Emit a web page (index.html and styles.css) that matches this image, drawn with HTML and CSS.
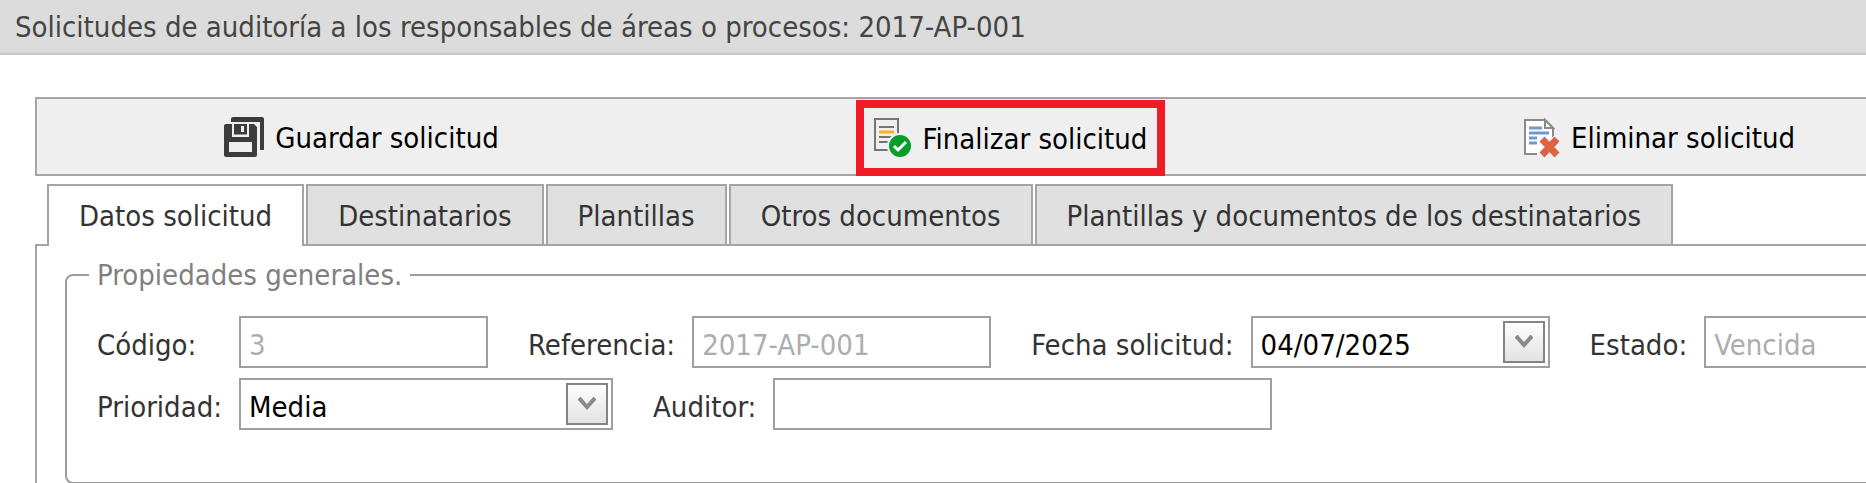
FILE: index.html
```
<!DOCTYPE html>
<html lang="es">
<head>
  <meta charset="UTF-8" />
  <meta name="viewport" content="width=device-width, initial-scale=1.0" />
  <title>Solicitudes de auditoría</title>
  <link rel="stylesheet" href="styles.css">
</head>
<body>
  <header class="page-header">
    <h1>Solicitudes de auditoría a los responsables de áreas o procesos: 2017-AP-001</h1>
  </header>

  <main class="content">
    <div class="toolbar">
      <div class="toolbar-cell">
        <button type="button" class="tool">
          <svg class="tool-icon" width="40" height="40" viewBox="0 0 40 40" aria-hidden="true">
            <path d="M9 0h29a2 2 0 0 1 2 2v31h-4V5H7V2a2 2 0 0 1 2-2z" fill="#3c3c3c"/>
            <path d="M2 7h6v13h17V7h5l3 3v28a2 2 0 0 1-2 2H2a2 2 0 0 1-2-2V9a2 2 0 0 1 2-2z" fill="#3c3c3c"/>
            <path d="M10 7h13v10.500H10z" fill="#3c3c3c"/>
            <path d="M17 9h3v6h-3z" fill="#efefef"/>
            <path d="M5 25h23v10H5z" fill="#efefef"/>
          </svg>
          <span>Guardar solicitud</span>
        </button>
      </div>
      <div class="toolbar-cell">
        <button type="button" class="tool tool-marked">
          <svg class="tool-icon" width="38" height="40" viewBox="0 0 38 40" aria-hidden="true">
            <rect x="1" y="1" width="23" height="31" fill="#efefef" stroke="#757575" stroke-width="2"/>
            <path d="M5 9h15M5 19h15M5 24h11" stroke="#757575" stroke-width="2"/>
            <path d="M5 14h15" stroke="#fcb026" stroke-width="3"/>
            <circle cx="26" cy="28" r="13" fill="#efefef"/>
            <circle cx="26" cy="28" r="11" fill="#069e2a"/>
            <path d="M20 28l4 4 8-8" fill="none" stroke="#fff" stroke-width="3"/>
          </svg>
          <span>Finalizar solicitud</span>
        </button>
      </div>
      <div class="toolbar-cell">
        <button type="button" class="tool">
          <svg class="tool-icon" width="36" height="40" viewBox="0 0 36 40" aria-hidden="true">
            <path d="M13 37H1V3h20l8 8v9" fill="#fff" stroke="#8a8a8a" stroke-width="2"/>
            <path d="M21 3v8h8z" fill="#fff" stroke="#8a8a8a" stroke-width="2"/>
            <path d="M5 11h13M5 16h20M5 21h8M5 26h8" stroke="#6c9bd0" stroke-width="3"/>
            <path d="M18 22l15 16M33 22l-15 16" stroke="#fff" stroke-width="9"/>
            <path d="M18 22l15 16M33 22l-15 16" stroke="#dc6344" stroke-width="7"/>
          </svg>
          <span>Eliminar solicitud</span>
        </button>
      </div>
    </div>

    <div class="tabs" role="tablist">
      <button type="button" class="tab active" role="tab" aria-selected="true">Datos solicitud</button>
      <button type="button" class="tab" role="tab">Destinatarios</button>
      <button type="button" class="tab" role="tab">Plantillas</button>
      <button type="button" class="tab" role="tab">Otros documentos</button>
      <button type="button" class="tab" role="tab">Plantillas y documentos de los destinatarios</button>
    </div>

    <form class="panel">
      <fieldset>
        <legend>Propiedades generales.</legend>
        <div class="form-row">
          <div class="field">
            <label class="first-label" for="codigo">Código:</label>
            <input type="text" id="codigo" class="w-small" value="3" disabled />
          </div>
          <div class="field">
            <label for="referencia">Referencia:</label>
            <input type="text" id="referencia" class="w-medium" value="2017-AP-001" disabled />
          </div>
          <div class="field">
            <label for="fecha">Fecha solicitud:</label>
            <div class="combo w-medium">
              <input type="text" id="fecha" value="04/07/2025" />
              <button type="button" class="combo-btn" aria-label="Abrir calendario">
                <svg width="18" height="14" viewBox="0 0 18 14"><path d="M1 1l8 9 8-9" fill="none" stroke="#8a8a8a" stroke-width="4"/></svg>
              </button>
            </div>
          </div>
          <div class="field">
            <label for="estado">Estado:</label>
            <input type="text" id="estado" class="w-medium" value="Vencida" disabled />
          </div>
        </div>
        <div class="form-row">
          <div class="field">
            <label class="first-label" for="prioridad">Prioridad:</label>
            <div class="combo w-large">
              <select id="prioridad">
                <option>Alta</option>
                <option selected>Media</option>
                <option>Baja</option>
              </select>
              <span class="combo-btn">
                <svg width="18" height="14" viewBox="0 0 18 14"><path d="M1 1l8 9 8-9" fill="none" stroke="#8a8a8a" stroke-width="4"/></svg>
              </span>
            </div>
          </div>
          <div class="field">
            <label for="auditor">Auditor:</label>
            <input type="text" id="auditor" class="w-xlarge" />
          </div>
        </div>
      </fieldset>
    </form>
  </main>
</body>
</html>
```
FILE: styles.css
```
:root {
  --border: #a5a5a5;
  --text: #333;
  --muted: #adadad;
  --mark: #ee1c25;
}

* {
  box-sizing: border-box;
}

body {
  margin: 0;
  font-family: 'DejaVu Sans Condensed', Tahoma, sans-serif;
  font-size: 29px;
  line-height: 36px;
  color: var(--text);
  background: #fff;
  overflow: hidden;
}

input, button, select {
  font: inherit;
  color: inherit;
}

.page-header {
  padding: 9px 15px 8px;
  background: #dcdcdc;
  border-bottom: 2px solid #c8c8c8;
}

h1 {
  margin: 0;
  font-size: 29px;
  font-weight: normal;
  color: #444;
}

/* the form is wider than the window and runs off to the right */
.content {
  margin: 42px -120px 0 35px;
}

.toolbar {
  display: flex;
  height: 79px;
  background: #efefef;
  border: 2px solid var(--border);
}

.toolbar-cell {
  flex: 1;
  display: flex;
  justify-content: center;
}

.tool {
  display: flex;
  align-items: center;
  gap: 11px;
  padding: 0 10px;
  border: none;
  background: none;
  color: #000;
  white-space: nowrap;
  cursor: pointer;
}

.tool span {
  padding-top: 2px;
}

.tool-icon {
  flex: none;
  overflow: visible;
}

.tool-marked {
  margin: 1px 0 -2px;
  border: 8px solid var(--mark);
}

.tabs {
  display: flex;
  gap: 2px;
  margin-top: 8px;
  padding-left: 12px;
}

.tab {
  height: 60px;
  padding: 2px 30px 0;
  border: 2px solid var(--border);
  border-bottom: none;
  background: #e0e0e0;
  white-space: nowrap;
  cursor: pointer;
}

.tab.active {
  height: 62px;
  margin-bottom: -2px;
  padding-top: 0;
  background: #fff;
  z-index: 1;
}

.panel {
  padding: 11px 28px 20px;
  border: 2px solid var(--border);
}

fieldset {
  margin: 0;
  padding: 23px 30px 42px;
  border: 2px solid #9c9c9c;
  border-radius: 8px;
}

legend {
  margin-left: -8px;
  padding: 0 8px;
  color: #808080;
}

.form-row {
  display: flex;
  gap: 40px;
  margin-bottom: 10px;
}

.field {
  display: flex;
  align-items: center;
  flex: none;
  gap: 17px;
}

label {
  padding-top: 6px;
}

.first-label {
  width: 125px;
}

input, select {
  height: 52px;
  padding: 6px 8px 0;
  border: 2px solid #9f9f9f;
  border-radius: 0;
  background: #fff;
  color: #000;
}

input:disabled {
  color: var(--muted);
}

select {
  appearance: none;
}

.w-small {
  width: 249px;
}

.w-medium {
  width: 299px;
}

.w-large {
  width: 374px;
}

.w-xlarge {
  width: 499px;
}

.combo {
  position: relative;
}

.combo input, .combo select {
  display: block;
  width: 100%;
}

.combo-btn {
  position: absolute;
  top: 5px;
  right: 5px;
  display: flex;
  align-items: center;
  justify-content: center;
  width: 42px;
  height: 42px;
  padding: 0;
  border: 2px solid #848484;
  background: linear-gradient(#fff, #e2e2e2);
  pointer-events: none;
}
```
